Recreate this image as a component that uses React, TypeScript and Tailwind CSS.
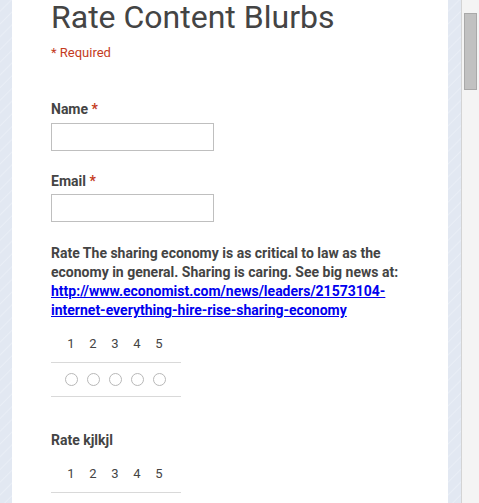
import React from "react";

const stripe =
  "bg-[#e2e8f2] bg-[repeating-linear-gradient(135deg,#e2e8f2_0px,#e2e8f2_7px,#e9eef6_8px,#e2e8f2_9px)]";

function Numbers() {
  return (
    <div className="flex h-[28px] border-b border-[#d9d9d9] pl-[9px] text-[13px] leading-[18px] text-[#444]">
      {[1, 2, 3, 4, 5].map((n) => (
        <span key={n} className="w-[22px] text-center">
          {n}
        </span>
      ))}
    </div>
  );
}

export default function App() {
  return (
    <div
      className="flex h-screen w-full overflow-hidden bg-white"
      style={{ fontFamily: "Roboto, 'Liberation Sans', Arial, sans-serif" }}
    >
      {/* left frame stripe */}
      <div className={`w-[12px] shrink-0 ${stripe}`} />

      {/* form body */}
      <main className="flex-1 bg-white pl-[39px] text-[#444]">
        <h1 className="text-[32px] leading-[34px] font-normal text-[#444]">
          Rate Content Blurbs
        </h1>
        <p className="mt-[10px] text-[13px] leading-[18px] text-[#c43b1d]">* Required</p>

        <label className="mt-[38px] block text-[14px] leading-[18px] font-bold">
          Name <span className="text-[#c43b1d]">*</span>
        </label>
        <input className="mt-[5px] block h-[28px] w-[163px] border border-[#bfbfbf] bg-white outline-none" />

        <label className="mt-[21px] block text-[14px] leading-[18px] font-bold">
          Email <span className="text-[#c43b1d]">*</span>
        </label>
        <input className="mt-[4px] block h-[28px] w-[163px] border border-[#bfbfbf] bg-white outline-none" />

        <p className="mt-[22px] w-[352px] text-[14px] leading-[19px] font-bold">
          Rate The sharing economy is as critical to law as the economy in general. Sharing is
          caring. See big news at:{" "}
          <a href="#" className="text-[#0000ee] underline">
            http://www.economist.com/news/leaders/21573104-internet-everything-hire-rise-sharing-economy
          </a>
        </p>

        <div className="mt-[15px] w-[130px]">
          <Numbers />
          <div className="flex h-[34px] items-center border-b border-[#d9d9d9] pl-[9px]">
            {[1, 2, 3, 4, 5].map((n) => (
              <span key={n} className="flex w-[22px] justify-center">
                <span className="h-[13px] w-[13px] rounded-full border border-[#b8b8b8] bg-white" />
              </span>
            ))}
          </div>
        </div>

        <p className="mt-[34px] text-[14px] leading-[19px] font-bold">Rate kjlkjl</p>
        <div className="mt-[15px] w-[130px]">
          <Numbers />
        </div>
      </main>

      {/* right frame stripe */}
      <div className={`w-[13px] shrink-0 ${stripe}`} />
      <div className="w-px shrink-0 bg-[#d4d4d4]" />

      {/* scrollbar */}
      <div className="flex w-[17px] shrink-0 flex-col bg-[#f4f4f4] px-[2px]">
        <div className="h-[13px]" />
        <div className="h-[77px] w-[13px] border border-[#a9a9a9] bg-[#c1c1c1]" />
      </div>
    </div>
  );
}
